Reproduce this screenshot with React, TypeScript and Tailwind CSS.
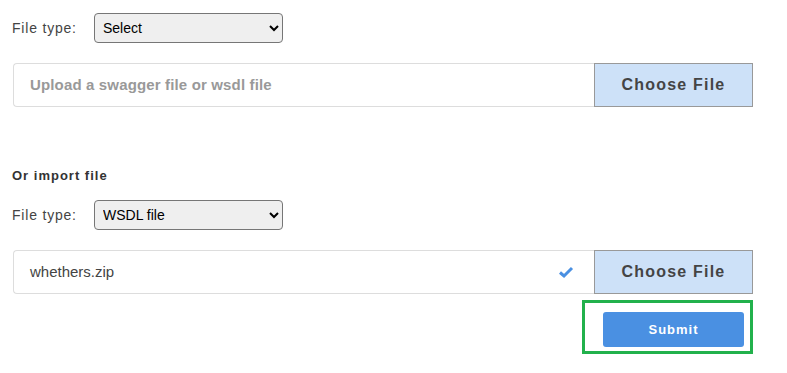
interface FileRowProps {
  placeholder?: string;
  fileName?: string;
  done?: boolean;
}

function FileTypeSelect({ value, options }: { value: string; options: string[] }) {
  return (
    <div className="flex items-center h-[30px]">
      <label className="text-[14px] tracking-[0.8px] text-[#444] w-[82px]">File type:</label>
      <select
        defaultValue={value}
        className="h-[30px] w-[189px] rounded-[4px] border border-[#767676] bg-[#efefef] pl-[4px] text-[14px] text-black"
      >
        {options.map((o) => (
          <option key={o}>{o}</option>
        ))}
      </select>
    </div>
  );
}

function FileRow({ placeholder, fileName, done }: FileRowProps) {
  return (
    <div className="flex h-[44px] w-[740px] ml-[1px]">
      <div className="flex flex-1 items-center rounded-l-[4px] border border-r-0 border-[#dddddd] pl-[16px] pr-[20px]">
        {fileName ? (
          <span className="flex-1 text-[15px] text-[#444]">{fileName}</span>
        ) : (
          <span className="flex-1 text-[15px] font-bold tracking-[0.15px] text-[#999]">{placeholder}</span>
        )}
        {done && (
          <svg width="16" height="14" viewBox="0 0 16 14">
            <path d="M2 7.5 L6 11 L14 3" fill="none" stroke="#4a90e2" strokeWidth="3" />
          </svg>
        )}
      </div>
      <button className="w-[159px] border border-[#999] bg-[#cde1f8] text-[16px] font-bold tracking-[1.2px] text-[#444]">
        Choose File
      </button>
    </div>
  );
}

export default function App() {
  return (
    <div className="h-[373px] w-[787px] bg-white pl-[12px] pt-[13px] font-['Liberation_Sans',Arial,sans-serif]">
      <FileTypeSelect value="Select" options={["Select", "Swagger file", "WSDL file"]} />
      <div className="mt-[20px]">
        <FileRow placeholder="Upload a swagger file or wsdl file" />
      </div>

      <h3 className="mt-[61px] text-[13px] font-bold tracking-[1px] text-[#333] leading-[16px]">Or import file</h3>
      <div className="mt-[16px]">
        <FileTypeSelect value="WSDL file" options={["Select", "Swagger file", "WSDL file"]} />
      </div>
      <div className="mt-[20px]">
        <FileRow fileName="whethers.zip" done />
      </div>

      <div className="flex justify-end w-[741px] mt-[6px]">
        <div className="flex h-[54px] w-[171px] justify-end border-[3px] border-[#22b14c] pt-[9px] pr-[6px]">
          <button className="h-[35px] w-[141px] rounded-[3px] bg-[#4a90e2] text-[13px] font-bold tracking-[1px] text-white">
            Submit
          </button>
        </div>
      </div>
    </div>
  );
}
